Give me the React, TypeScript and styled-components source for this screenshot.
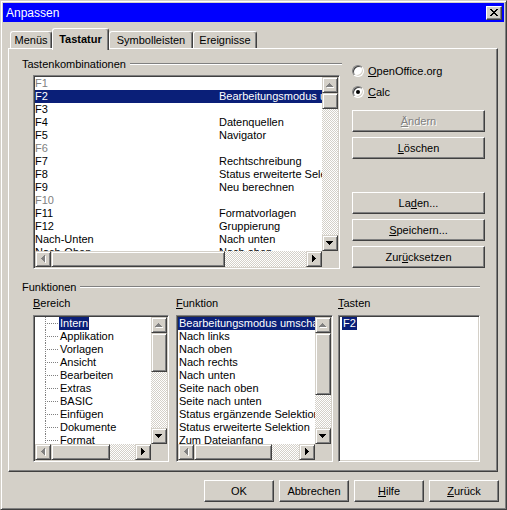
import React from 'react';
import styled, { createGlobalStyle, css } from 'styled-components';

const face = '#d4d0c8';
const shadow = '#808080';
const dark = '#404040';
const selection = '#0a1f78';

const GlobalStyle = createGlobalStyle`
  html, body {
    margin: 0;
    padding: 0;
    background: ${face};
  }
  body {
    font-family: "Liberation Sans", Arial, sans-serif;
    font-size: 11px;
    color: #000;
  }
  * {
    box-sizing: border-box;
  }
`;

const raised = css`
  border: 1px solid;
  border-color: #fff ${dark} ${dark} #fff;
  box-shadow: inset -1px -1px ${shadow};
`;

const sunken = css`
  border: 1px solid;
  border-color: ${shadow} #fff #fff ${shadow};
  box-shadow: inset 1px 1px ${dark}, inset -1px -1px ${face};
  padding: 1px;
`;

const Window = styled.div`
  width: 507px;
  height: 510px;
  background: ${face};
  border: 1px solid;
  border-color: ${face} ${dark} ${dark} ${face};
  box-shadow: inset 1px 1px #fff, inset -1px -1px ${shadow};
  padding: 2px;
  display: flex;
  flex-direction: column;
`;

const TitleBar = styled.div`
  height: 19px;
  background: #0000ff;
  color: #fff;
  font-size: 12px;
  display: flex;
  align-items: center;
  justify-content: space-between;
  padding: 0 2px 0 3px;
`;

const CloseButton = styled.div`
  width: 16px;
  height: 14px;
  background: ${face};
  border: 1px solid;
  border-color: #fff ${dark} ${dark} #fff;
  box-shadow: inset -1px -1px ${shadow};
  display: flex;
  align-items: center;
  justify-content: center;
`;

const Body = styled.div`
  display: flex;
  flex-direction: column;
  padding: 0 6px 0 5px;
`;

const TabStrip = styled.div`
  height: 26px;
  display: flex;
  align-items: flex-end;
  padding-left: 2px;
`;

const Tab = styled.div<{ $active?: boolean; $w: number }>`
  width: ${p => p.$w}px;
  height: ${p => (p.$active ? 22 : 17)}px;
  margin-bottom: ${p => (p.$active ? -2 : 0)}px;
  position: relative;
  z-index: ${p => (p.$active ? 1 : 0)};
  background: ${face};
  border-top: 1px solid #fff;
  border-left: 1px solid #fff;
  border-right: 1px solid ${dark};
  border-radius: 3px 3px 0 0;
  box-shadow: inset -1px 0 ${shadow};
  font-weight: ${p => (p.$active ? 'bold' : 'normal')};
  display: flex;
  align-items: ${p => (p.$active ? 'flex-start' : 'center')};
  padding-top: ${p => (p.$active ? 4 : 0)}px;
  justify-content: center;
`;

const Panel = styled.div`
  height: 424px;
  ${raised};
  display: flex;
  flex-direction: column;
`;

const TopSection = styled.div`
  display: flex;
  margin-top: 8px;
  padding-left: 13px;
`;

const LeftColumn = styled.div`
  width: 320px;
  display: flex;
  flex-direction: column;
`;

const RightColumn = styled.div`
  width: 133px;
  margin-left: 10px;
  margin-top: 7px;
  display: flex;
  flex-direction: column;
`;

const FixedLine = styled.div`
  height: 13px;
  display: flex;
  align-items: center;
  gap: 4px;
  white-space: nowrap;
`;

const Etch = styled.div`
  flex: 1;
  height: 2px;
  border-top: 1px solid ${shadow};
  border-bottom: 1px solid #fff;
`;

const RadioRow = styled.div<{ $mt?: number }>`
  height: 13px;
  margin-top: ${p => p.$mt ?? 0}px;
  display: flex;
  align-items: center;
  gap: 4px;
`;

const RadioCircle = styled.div`
  width: 12px;
  height: 12px;
  border-radius: 50%;
  border: 1px solid;
  border-color: ${shadow} #fff #fff ${shadow};
  box-shadow: inset 1px 1px ${dark}, inset -1px -1px ${face};
  background: #fff;
  display: flex;
  align-items: center;
  justify-content: center;
`;

const RadioDot = styled.div`
  width: 4px;
  height: 4px;
  border-radius: 50%;
  background: #000;
`;

const Button = styled.div<{ $mt?: number; $w?: number; $disabled?: boolean }>`
  height: 22px;
  width: ${p => (p.$w ? `${p.$w}px` : 'auto')};
  margin-top: ${p => p.$mt ?? 0}px;
  ${raised};
  background: ${face};
  display: flex;
  align-items: center;
  justify-content: center;
  color: ${p => (p.$disabled ? shadow : '#000')};
  text-shadow: ${p => (p.$disabled ? '1px 1px #fff' : 'none')};
`;

const Acc = styled.span`
  text-decoration: underline;
  text-underline-offset: 1px;
`;

const BottomSection = styled.div`
  margin-top: 11px;
  padding: 0 17px 0 13px;
  display: flex;
  flex-direction: column;
`;

const Columns = styled.div`
  display: flex;
  margin: 4px 0 0 11px;
`;

const Column = styled.div<{ $w: number; $ml?: number }>`
  width: ${p => p.$w}px;
  margin-left: ${p => p.$ml ?? 0}px;
  display: flex;
  flex-direction: column;
`;

const ColumnLabel = styled.div`
  height: 13px;
  line-height: 13px;
  margin-bottom: 5px;
`;

const ListFrame = styled.div<{ $w?: number; $h: number; $ml?: number; $mt?: number; $scroll?: boolean }>`
  ${sunken};
  width: ${p => (p.$w ? `${p.$w}px` : 'auto')};
  height: ${p => p.$h}px;
  margin-left: ${p => p.$ml ?? 0}px;
  margin-top: ${p => p.$mt ?? 0}px;
  background: #fff;
  display: grid;
  grid-template-columns: ${p => (p.$scroll ? '1fr 16px' : '1fr')};
  grid-template-rows: ${p => (p.$scroll ? '1fr 16px' : '1fr')};
`;

const ListBody = styled.div<{ $pl?: number }>`
  overflow: hidden;
  min-width: 0;
  min-height: 0;
  padding-left: ${p => p.$pl ?? 0}px;
`;

const Row = styled.div<{ $sel?: boolean; $off?: boolean; $pl?: number }>`
  height: 13px;
  line-height: 13px;
  display: flex;
  white-space: nowrap;
  padding-left: ${p => p.$pl ?? 0}px;
  background: ${p => (p.$sel ? selection : 'transparent')};
  color: ${p => (p.$sel ? '#fff' : p.$off ? shadow : '#000')};
`;

const KeyCell = styled.span`
  width: 184px;
  flex: none;
`;

const TreeRow = styled.div`
  height: 13px;
  line-height: 13px;
  white-space: nowrap;
  padding-left: 24px;
  background:
    repeating-linear-gradient(to bottom, ${shadow} 0 1px, transparent 1px 2px) 10px 0 / 1px 100% no-repeat,
    repeating-linear-gradient(to right, ${shadow} 0 1px, transparent 1px 2px) 10px 6px / 13px 1px no-repeat;
`;

const ItemLabel = styled.span<{ $sel?: boolean }>`
  padding: 0 1px;
  display: inline-block;
  background: ${p => (p.$sel ? selection : 'transparent')};
  color: ${p => (p.$sel ? '#fff' : '#000')};
`;

const VBar = styled.div`
  display: flex;
  flex-direction: column;
  background: ${face};
`;

const HBar = styled.div`
  display: flex;
  background: ${face};
`;

const Track = styled.div`
  flex: 1;
  background: repeating-conic-gradient(${face} 0 25%, #fff 0 50%) 0 0 / 2px 2px;
`;

const ScrollPart = styled.div<{ $size?: number; $vertical?: boolean }>`
  flex: none;
  width: ${p => (p.$vertical ? 16 : p.$size ?? 16)}px;
  height: ${p => (p.$vertical ? p.$size ?? 16 : 16)}px;
  background: ${face};
  border: 1px solid;
  border-color: ${face} ${dark} ${dark} ${face};
  box-shadow: inset 1px 1px #fff, inset -1px -1px ${shadow};
  display: flex;
  align-items: center;
  justify-content: center;
`;

const Corner = styled.div`
  background: ${face};
`;

const Footer = styled.div`
  display: flex;
  justify-content: flex-end;
  gap: 5px;
  padding: 8px 5px 0 0;
`;

type Dir = 'up' | 'down' | 'left' | 'right';

const arrowPath: Record<Dir, string> = {
  up: 'M6 5h1v1H6zM5 6h3v1H5zM4 7h5v1H4zM3 8h7v1H3z',
  down: 'M3 5h7v1H3zM4 6h5v1H4zM5 7h3v1H5zM6 8h1v1H6z',
  left: 'M5 6h1v1H5zM6 5h1v3H6zM7 4h1v5H7zM8 3h1v7H8z',
  right: 'M5 3h1v7H5zM6 4h1v5H6zM7 5h1v3H7zM8 6h1v1H8z',
};

const Arrow = ({ dir, disabled }: { dir: Dir; disabled?: boolean }) => (
  <ScrollPart $vertical={dir === 'up' || dir === 'down'}>
    <svg width="14" height="14" viewBox="0 0 14 14" shapeRendering="crispEdges">
      {disabled && <path d={arrowPath[dir]} fill="#fff" transform="translate(1 1)" />}
      <path d={arrowPath[dir]} fill={disabled ? shadow : '#000'} />
    </svg>
  </ScrollPart>
);

const VScroll = ({ thumb }: { thumb: number }) => (
  <VBar>
    <Arrow dir="up" disabled />
    <ScrollPart $vertical $size={thumb} />
    <Track />
    <Arrow dir="down" />
  </VBar>
);

const HScroll = ({ thumb }: { thumb: number }) => (
  <HBar>
    <Arrow dir="left" disabled />
    <ScrollPart $size={thumb} />
    <Track />
    <Arrow dir="right" />
  </HBar>
);

const shortcuts = [
  { key: 'F1', fn: '', off: true },
  { key: 'F2', fn: 'Bearbeitungsmodus umschalten', sel: true },
  { key: 'F3', fn: '' },
  { key: 'F4', fn: 'Datenquellen' },
  { key: 'F5', fn: 'Navigator' },
  { key: 'F6', fn: '', off: true },
  { key: 'F7', fn: 'Rechtschreibung' },
  { key: 'F8', fn: 'Status erweiterte Selektion' },
  { key: 'F9', fn: 'Neu berechnen' },
  { key: 'F10', fn: '', off: true },
  { key: 'F11', fn: 'Formatvorlagen' },
  { key: 'F12', fn: 'Gruppierung' },
  { key: 'Nach-Unten', fn: 'Nach unten' },
  { key: 'Nach-Oben', fn: 'Nach oben' },
];

const areas = [
  'Intern', 'Applikation', 'Vorlagen', 'Ansicht', 'Bearbeiten', 'Extras',
  'BASIC', 'Einfügen', 'Dokumente', 'Format', 'Navigieren',
];

const functions = [
  'Bearbeitungsmodus umschalten', 'Nach links', 'Nach oben', 'Nach rechts', 'Nach unten',
  'Seite nach oben', 'Seite nach unten', 'Status ergänzende Selektion',
  'Status erweiterte Selektion', 'Zum Dateianfang', 'Zum Dateiende',
];

const tabs = [
  { label: 'Menüs', w: 42 },
  { label: 'Tastatur', w: 57, active: true },
  { label: 'Symbolleisten', w: 84 },
  { label: 'Ereignisse', w: 64 },
];

const App = () => {
  return (
    <>
      <GlobalStyle />
      <Window>
        <TitleBar>
          <span>Anpassen</span>
          <CloseButton>
            <svg width="8" height="7" viewBox="0 0 8 7" shapeRendering="crispEdges">
              <path
                d="M0 0h2v1H0zM6 0h2v1H6zM1 1h2v1H1zM5 1h2v1H5zM2 2h4v1H2zM3 3h2v1H3zM2 4h4v1H2zM1 5h2v1H1zM5 5h2v1H5zM0 6h2v1H0zM6 6h2v1H6z"
                fill="#000"
              />
            </svg>
          </CloseButton>
        </TitleBar>

        <Body>
          <TabStrip>
            {tabs.map(t => (
              <Tab key={t.label} $w={t.w} $active={t.active}>{t.label}</Tab>
            ))}
          </TabStrip>

          <Panel>
            <TopSection>
              <LeftColumn>
                <FixedLine>
                  Tastenkombinationen
                  <Etch />
                </FixedLine>
                <ListFrame $w={307} $h={194} $ml={11} $mt={5} $scroll>
                  <ListBody>
                    {shortcuts.map(s => (
                      <Row key={s.key} $sel={s.sel} $off={s.off}>
                        <KeyCell>{s.key}</KeyCell>
                        <span>{s.fn}</span>
                      </Row>
                    ))}
                  </ListBody>
                  <VScroll thumb={16} />
                  <HScroll thumb={174} />
                  <Corner />
                </ListFrame>
              </LeftColumn>

              <RightColumn>
                <RadioRow>
                  <RadioCircle />
                  <span><Acc>O</Acc>penOffice.org</span>
                </RadioRow>
                <RadioRow $mt={8}>
                  <RadioCircle><RadioDot /></RadioCircle>
                  <span><Acc>C</Acc>alc</span>
                </RadioRow>
                <Button $mt={12} $disabled><span><Acc>Ä</Acc>ndern</span></Button>
                <Button $mt={5}><span><Acc>L</Acc>öschen</span></Button>
                <Button $mt={33}><span>La<Acc>d</Acc>en...</span></Button>
                <Button $mt={5}><span><Acc>S</Acc>peichern...</span></Button>
                <Button $mt={5}><span>Zur<Acc>ü</Acc>cksetzen</span></Button>
              </RightColumn>
            </TopSection>

            <BottomSection>
              <FixedLine>
                Funktionen
                <Etch />
              </FixedLine>
              <Columns>
                <Column $w={136}>
                  <ColumnLabel><Acc>B</Acc>ereich</ColumnLabel>
                  <ListFrame $h={147} $scroll>
                    <ListBody>
                      {areas.map((a, i) => (
                        <TreeRow key={a}>
                          <ItemLabel $sel={i === 0}>{a}</ItemLabel>
                        </TreeRow>
                      ))}
                    </ListBody>
                    <VScroll thumb={39} />
                    <HScroll thumb={59} />
                    <Corner />
                  </ListFrame>
                </Column>

                <Column $w={157} $ml={7}>
                  <ColumnLabel><Acc>F</Acc>unktion</ColumnLabel>
                  <ListFrame $h={147} $scroll>
                    <ListBody>
                      {functions.map((f, i) => (
                        <Row key={f} $sel={i === 0} $pl={1}>{f}</Row>
                      ))}
                    </ListBody>
                    <VScroll thumb={62} />
                    <HScroll thumb={78} />
                    <Corner />
                  </ListFrame>
                </Column>

                <Column $w={142} $ml={5}>
                  <ColumnLabel><Acc>T</Acc>asten</ColumnLabel>
                  <ListFrame $h={147}>
                    <ListBody $pl={2}>
                      <Row><ItemLabel $sel>F2</ItemLabel></Row>
                    </ListBody>
                  </ListFrame>
                </Column>
              </Columns>
            </BottomSection>
          </Panel>
        </Body>

        <Footer>
          <Button $w={70}>OK</Button>
          <Button $w={70}>Abbrechen</Button>
          <Button $w={70}><span><Acc>H</Acc>ilfe</span></Button>
          <Button $w={70}><span><Acc>Z</Acc>urück</span></Button>
        </Footer>
      </Window>
    </>
  );
};

export default App;
